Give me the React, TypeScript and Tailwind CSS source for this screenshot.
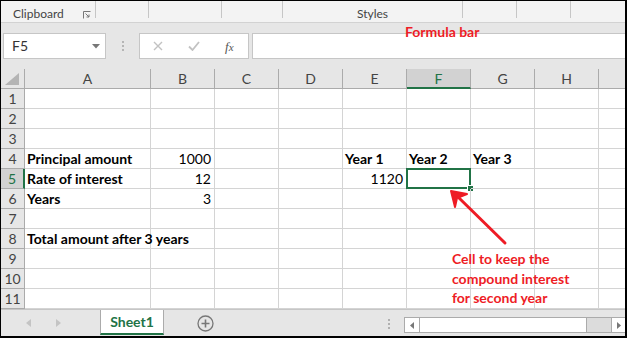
import React from "react";

const cols = [
  { l: "A", w: "w-[126px]" },
  { l: "B", w: "w-[64px]" },
  { l: "C", w: "w-[64px]" },
  { l: "D", w: "w-[64px]" },
  { l: "E", w: "w-[64px]" },
  { l: "F", w: "w-[64px]" },
  { l: "G", w: "w-[64px]" },
  { l: "H", w: "w-[64px]" },
  { l: "", w: "w-[26px]" },
];

type Cell = { t: string; b?: boolean; r?: boolean };
const data: Record<number, Record<string, Cell>> = {
  4: {
    A: { t: "Principal amount", b: true },
    B: { t: "1000", r: true },
    E: { t: "Year 1", b: true },
    F: { t: "Year 2", b: true },
    G: { t: "Year 3", b: true },
  },
  5: {
    A: { t: "Rate of interest", b: true },
    B: { t: "12", r: true },
    E: { t: "1120", r: true },
  },
  6: { A: { t: "Years", b: true }, B: { t: "3", r: true } },
  8: { A: { t: "Total amount after 3 years", b: true } },
};

const font = { fontFamily: "Lato, 'Noto Sans', sans-serif" };

export default function App() {
  const rows = Array.from({ length: 11 }, (_, i) => i + 1);
  return (
    <div className="w-[629px] h-[339px] bg-white" style={font}>
      <div className="relative w-[627px] h-[338px] border-l border-t border-r-2 border-b-2 border-black flex flex-col overflow-hidden">
        {/* Ribbon */}
        <div className="h-[21px] bg-[#f3f3f3] flex text-[12px] text-[#444]">
          <div className="w-[95px] h-[17px] border-r border-[#c6c6c6] relative">
            <span className="absolute left-[12px] top-[6px] leading-[14px]">Clipboard</span>
            <svg className="absolute left-[82px] top-[10px]" width="8" height="8" viewBox="0 0 8 8">
              <path d="M0.5 7.5V0.5H7.5" fill="none" stroke="#777" strokeWidth="1" />
              <path d="M2.5 2.5L6 6M6 3.5V6H3.5" fill="none" stroke="#777" strokeWidth="1" />
            </svg>
          </div>
          <div className="w-[53px] h-[17px] border-r border-[#c6c6c6]" />
          <div className="w-[73px] h-[17px] border-r border-[#c6c6c6]" />
          <div className="w-[61px] h-[17px] border-r border-[#c6c6c6]" />
          <div className="w-[180px] h-[17px] border-r border-[#c6c6c6] relative flex justify-center">
            <span className="absolute top-[6px] leading-[14px]">Styles</span>
          </div>
          <div className="w-[54px] h-[17px] border-r border-[#c6c6c6]" />
          <div className="w-[54px] h-[17px] border-r border-[#c6c6c6]" />
          <div className="flex-1" />
        </div>
        <div className="h-px bg-[#d2d2d2]" />
        {/* Formula area */}
        <div className="relative h-[46px] bg-[#e6e6e6] flex items-start pt-[10px] pl-[2px]">
          <div className="w-[103px] h-[26px] bg-white border border-[#c6c6c6] flex items-center justify-between pl-[8px] pr-[5px]">
            <span className="text-[14px] text-[#333] leading-none">F5</span>
            <svg width="8" height="5" viewBox="0 0 8 5">
              <path d="M0 0H8L4 4.5Z" fill="#777" />
            </svg>
          </div>
          <div className="w-[33px] h-[26px] flex flex-col items-center justify-center gap-[2px]">
            <div className="w-[2px] h-[2px] bg-[#b5b5b5]" />
            <div className="w-[2px] h-[2px] bg-[#b5b5b5]" />
            <div className="w-[2px] h-[2px] bg-[#b5b5b5]" />
          </div>
          <div className="w-[110px] h-[26px] bg-white border border-[#c6c6c6] flex items-center">
            <svg className="ml-[13px]" width="10" height="10" viewBox="0 0 10 10">
              <path d="M1 1L9 9M9 1L1 9" stroke="#c2c2c2" strokeWidth="1.4" />
            </svg>
            <svg className="ml-[25px]" width="12" height="10" viewBox="0 0 12 10">
              <path d="M1 5.5L4.5 9L11 1" fill="none" stroke="#c2c2c2" strokeWidth="1.8" />
            </svg>
            <span
              className="ml-[25px] text-[13px] italic text-[#555] leading-none"
              style={{ fontFamily: "'Liberation Serif', serif" }}
            >
              f<span className="text-[11px]">x</span>
            </span>
          </div>
          <div className="ml-[3px] flex-1 h-[26px] bg-white border-y border-l border-[#c6c6c6]" />
          <span className="absolute left-[404px] top-[1px] text-[14px] font-bold text-[#ee1c25] leading-[16px]">
            Formula bar
          </span>
        </div>
        {/* Header row */}
        <div className="flex h-[20px] bg-[#e6e6e6] text-[14px] text-[#444]">
          <div className="w-[24px] border-r border-b border-[#ababab] relative">
            <svg className="absolute left-[4px] top-[4px]" width="14" height="12" viewBox="0 0 14 12">
              <path d="M14 0V12H0Z" fill="#b4b4b4" />
            </svg>
          </div>
          {cols.map((c) => (
            <div
              key={c.l || "x"}
              className={`${c.w} flex items-center justify-center ${
                c.l === "F"
                  ? "bg-[#d2d2d2] text-[#217346] border-b-2 border-b-[#217346] border-r border-r-[#ababab]"
                  : "border-r border-b border-[#ababab]"
              } ${c.l === "" ? "border-r-0" : ""}`}
            >
              {c.l}
            </div>
          ))}
        </div>
        {/* Rows */}
        <div className="relative flex flex-col">
          {rows.map((r) => (
            <div key={r} className="flex h-[20px] text-[14px]">
              <div
                className={`w-[24px] flex items-center justify-center ${
                  r === 5
                    ? "bg-[#d2d2d2] text-[#217346] border-r-2 border-r-[#217346] border-b border-b-[#ababab]"
                    : "bg-[#e6e6e6] text-[#444] border-r border-b border-[#ababab]"
                }`}
              >
                {r}
              </div>
              {cols.map((c) => {
                const cell = data[r]?.[c.l];
                const sel = r === 5 && c.l === "F";
                return (
                  <div
                    key={c.l || "x"}
                    className={`${c.w} relative border-b border-[#d4d4d4] ${
                      c.l === "" ? "" : "border-r"
                    } flex items-center ${cell?.r ? "justify-end pr-[3px]" : "pl-[2px]"}`}
                  >
                    {cell && (
                      <span
                        className={`whitespace-nowrap text-black leading-[18px] ${
                          cell.b ? "font-bold" : ""
                        } ${cell.r ? "" : "absolute left-[2px]"}`}
                      >
                        {cell.t}
                      </span>
                    )}
                    {sel && (
                      <>
                        <div className="absolute left-[-1px] top-[-1px] w-[65px] h-[21px] border-2 border-[#217346]" />
                        <div className="absolute left-[60px] top-[16px] w-[7px] h-[7px] bg-[#217346] border border-white" />
                      </>
                    )}
                  </div>
                );
              })}
            </div>
          ))}
          {/* Annotation */}
          <svg className="absolute left-0 top-0" width="624" height="220" viewBox="0 0 624 220">
            <line x1="504" y1="154" x2="456" y2="107" stroke="#ee1c25" strokeWidth="3" strokeLinecap="round" />
            <path d="M450 102L466 105L456 109L454 118Z" fill="#ee1c25" stroke="#ee1c25" strokeWidth="2" strokeLinejoin="round" />
          </svg>
          <div className="absolute left-[451px] top-[160px] text-[14px] font-bold text-[#ee1c25] leading-[19.5px]">
            <div>Cell to keep the</div>
            <div>compound interest</div>
            <div>for second year</div>
          </div>
        </div>
        {/* Tab bar */}
        <div className="flex-1 bg-[#e6e6e6] border-t border-[#c6c6c6] flex items-start relative">
          <svg className="absolute left-[25px] top-[9px]" width="6" height="8" viewBox="0 0 6 8">
            <path d="M5 0V8L0 4Z" fill="#c4c4c4" />
          </svg>
          <svg className="absolute left-[55px] top-[9px]" width="6" height="8" viewBox="0 0 6 8">
            <path d="M0 0V8L5 4Z" fill="#c4c4c4" />
          </svg>
          <div className="ml-[99px] w-[64px] h-[25px] bg-white border-x border-[#ababab] border-b-2 border-b-[#217346] flex items-center justify-center text-[14px] font-bold text-[#217346]">
            Sheet1
          </div>
          <svg className="ml-[33px] mt-[5px]" width="17" height="17" viewBox="0 0 17 17">
            <circle cx="8.5" cy="8.5" r="7.5" fill="none" stroke="#777" strokeWidth="1.3" />
            <path d="M8.5 4.5V12.5M4.5 8.5H12.5" stroke="#777" strokeWidth="1.6" />
          </svg>
          <div className="ml-[174px] mt-[9px] flex flex-col gap-[2px]">
            <div className="w-[2px] h-[2px] bg-[#b0b0b0]" />
            <div className="w-[2px] h-[2px] bg-[#b0b0b0]" />
            <div className="w-[2px] h-[2px] bg-[#b0b0b0]" />
          </div>
          <div className="ml-[14px] mt-[7px] flex-1 h-[16px] flex bg-[#dcdcdc] border-y border-l border-[#ababab]">
            <div className="w-[15px] h-full bg-white border-r border-[#ababab] flex items-center justify-center">
              <svg width="4" height="7" viewBox="0 0 4 7">
                <path d="M4 0V7L0 3.5Z" fill="#777" />
              </svg>
            </div>
            <div className="w-[167px] h-full bg-white border-r border-[#ababab]" />
            <div className="flex-1" />
            <div className="w-[14px] h-full bg-white border-l border-[#ababab] flex items-center justify-center">
              <svg width="4" height="7" viewBox="0 0 4 7">
                <path d="M0 0V7L4 3.5Z" fill="#777" />
              </svg>
            </div>
          </div>
        </div>
      </div>
    </div>
  );
}
